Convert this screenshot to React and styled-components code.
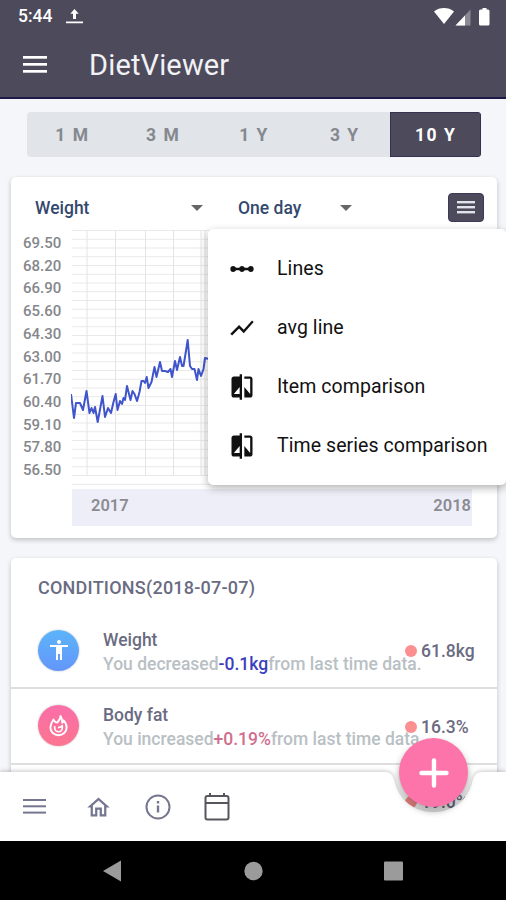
import React, { useState } from 'react'
import styled, { createGlobalStyle } from 'styled-components'
import { MdLinearScale, MdShowChart, MdCompare, MdAccessibility, MdOutlineHome } from 'react-icons/md'

const periods = ['1 M', '3 M', '1 Y', '3 Y', '10 Y']

const yLabels = ['69.50', '68.20', '66.90', '65.60', '64.30', '63.00', '61.70', '60.40', '59.10', '57.80', '56.50']

const menuItems = [
  { label: 'Lines', icon: MdLinearScale },
  { label: 'avg line', icon: MdShowChart },
  { label: 'Item comparison', icon: MdCompare },
  { label: 'Time series comparison', icon: MdCompare },
]

const weights = '71,394 74,418 76,403 80,403 83,410 86.5,391 89.5,413 91.5,408 93.5,413 95,407 97.7,422 102.5,396 105,417 108,408 111,413 113.5,402 115.7,394 117.5,410 120,401 122,404 123.5,398 125,400 127,386 129.5,396 130.5,400 132.5,391 134.5,394 137,401 139.5,392 141.5,381 143.5,381 145,383 146.7,377 148.5,388 151.5,382 154.5,367 156.5,377 160,362 162,371 165,371 168,372 170.5,369 172,377 175,361 177,370 180,357 182,366 183.5,366 185,357 187.7,340 190,366 192,369 194.5,369 197,380 198.5,369 201,376 203.5,369 205,358 209,359'

const gridX = [87, 115.5, 145.5, 173.5, 201, 205]
const gridY = Array.from({ length: 30 }, (_, i) => 230.5 + i * 8.75)

const FlameIcon = () => (
  <svg width="21" height="23" viewBox="0 0 22 24" fill="none" stroke="#fff" strokeWidth="2" strokeLinejoin="round">
    <path d="M13 2c.4 2.600-1 4.300-2.400 6C9.300 9.600 7.500 9 5.800 5.800 3.400 9 2.500 11.500 2.500 14.200a8.500 8 0 0 0 17 0c0-3.200-1.400-5.700-3.200-7.600-.3 1.400-.6 2-1.300 2.600C15 6.500 14.600 4 13 2z" />
    <path d="M7 12.500v2a4 4 0 0 0 8 0v-2.500c-1.200 1.600-2.300 2-4.500 2.200" strokeWidth="1.700" />
  </svg>
)

const LinesIcon = ({ width, height, gap, stroke, color }) => (
  <svg width={width} height={height}>
    {[0, 1, 2].map(i => (
      <rect key={i} x="0" y={i * gap} width={width} height={stroke} fill={color} />
    ))}
  </svg>
)

const Chart = () => (
  <ChartSvg viewBox="71 230 401 256">
    {gridY.map(y => <line key={y} x1="72" x2="472" y1={y} y2={y} stroke="#e9e9e9" />)}
    {gridX.map(x => <line key={x} x1={x} x2={x} y1="230" y2="476" stroke="#e4e4e4" />)}
    <polyline points={weights} fill="none" stroke="#4054cc" strokeWidth="2" strokeLinejoin="round" />
  </ChartSvg>
)

const Condition = ({ title, icon, colors, verb, diff, diffColor, value }) => (
  <ConditionRow>
    <RoundIcon $colors={colors}>{icon}</RoundIcon>
    <ConditionText>
      <ConditionTitle>{title}</ConditionTitle>
      <ConditionNote>You {verb}<Diff $color={diffColor}>{diff}</Diff>from last time data.</ConditionNote>
    </ConditionText>
    <ConditionValue><Dot />{value}</ConditionValue>
  </ConditionRow>
)

const App = () => {
  const [period, setPeriod] = useState('10 Y')

  return (
    <Screen>
      <GlobalStyle />
      <Header>
        <StatusBar>
          <Clock>5:44</Clock>
          <svg width="17" height="15" viewBox="0 0 17 15" fill="#fff">
            <path d="M8.500 0l4.200 4.800H10V10H7V4.800H4.300zM0 12.500h17v1.800H0z" />
          </svg>
          <StatusIcons>
            <svg width="60" height="20" viewBox="0 0 60 20" fill="#fff">
              <path d="M0 4.500C5.500-.1 14.500-.1 20 4.500L10 17z" />
              <path d="M36.500 2.500v16h-15z" opacity=".35" />
              <path d="M31 8.500v10h-9.500z" />
              <path d="M48.500 1h4v1.500h1.500q1.500 0 1.500 1.500v13q0 1.500-1.500 1.500h-7.500q-1.500 0-1.500-1.500V4q0-1.500 1.500-1.500h2z" />
            </svg>
          </StatusIcons>
        </StatusBar>
        <TitleBar>
          <LinesIcon width={24} height={18} gap={7} stroke={2.700} color="#fff" />
          <AppTitle>DietViewer</AppTitle>
        </TitleBar>
      </Header>

      <Content>
        <Periods>
          {periods.map(p => (
            <Period key={p} $active={p === period} onClick={() => setPeriod(p)}>{p}</Period>
          ))}
        </Periods>

        <ChartCard>
          <Selects>
            <Select $width="168px">Weight<Caret /></Select>
            <Select $width="114px">One day<Caret /></Select>
            <MenuButton>
              <LinesIcon width={18} height={13} gap={5} stroke={2.400} color="#dfe3ea" />
            </MenuButton>
          </Selects>
          <ChartBody>
            <YAxis>
              {yLabels.map(label => <span key={label}>{label}</span>)}
            </YAxis>
            <Plot>
              <Chart />
              <XAxis>
                <span>2017</span>
                <span>2018</span>
              </XAxis>
            </Plot>
          </ChartBody>
          <Menu>
            {menuItems.map(({ label, icon: Icon }) => (
              <MenuItem key={label}><Icon size={28} />{label}</MenuItem>
            ))}
          </Menu>
        </ChartCard>

        <ConditionsCard>
          <CardTitle>CONDITIONS(2018-07-07)</CardTitle>
          <Condition
            title="Weight"
            icon={<MdAccessibility size={24} />}
            colors="#5cb4fa, #6496fa"
            verb="decreased"
            diff="-0.1kg"
            diffColor="#3b3fbf"
            value="61.8kg"
          />
          <Condition
            title="Body fat"
            icon={<FlameIcon />}
            colors="#fa6ea9, #fb7590"
            verb="increased"
            diff="+0.19%"
            diffColor="#cf6e8e"
            value="16.3%"
          />
          <ConditionRow>
            <ConditionValue><Dot />19.0%</ConditionValue>
          </ConditionRow>
        </ConditionsCard>
      </Content>

      <BottomBar>
        <BarShadow><BarShape /></BarShadow>
        <BarIcons>
          <LinesIcon width={23} height={16} gap={6.300} stroke={2} color="#75768f" />
          <HomeIcon size={27} />
          <svg width="26" height="26" viewBox="0 0 26 26" fill="none" stroke="currentColor" strokeWidth="2">
            <circle cx="13" cy="13" r="11.500" />
            <path d="M13 11.500v7M13 7v2.500" strokeWidth="2.400" />
          </svg>
          <svg width="26" height="28" viewBox="0 0 26 28" fill="none" stroke="#56565c" strokeWidth="2">
            <rect x="1.500" y="3" width="23" height="23.500" rx="2" />
            <path d="M1.500 10h23M6 0v3M20 0v3" />
          </svg>
        </BarIcons>
        <AddButton>
          <svg width="30" height="30" viewBox="0 0 30 30" stroke="#fff" strokeWidth="4.400" strokeLinecap="round">
            <path d="M15 2.500v25M2.500 15h25" />
          </svg>
        </AddButton>
      </BottomBar>

      <SystemNav>
        <svg width="506" height="59" fill="#9b9b9b">
          <path d="M103 30l18-10.500v21z" />
          <circle cx="253.500" cy="30" r="9.200" />
          <rect x="384" y="20.500" width="19" height="19" rx="1" />
        </svg>
      </SystemNav>
    </Screen>
  )
}

export default App

const GlobalStyle = createGlobalStyle`
  * {
    box-sizing: border-box;
  }
  body {
    margin: 0;
    font-family: Roboto, "Liberation Sans", sans-serif;
  }
  svg {
    display: block;
    flex-shrink: 0;
  }
`

const Screen = styled.div`
  display: flex;
  flex-direction: column;
  width: 506px;
  height: 900px;
  overflow: hidden;
  background: #f4f6f9;
`

const Header = styled.header`
  flex-shrink: 0;
  height: 99px;
  background: #4d4b5b;
  border-bottom: 2px solid #1d1847;
  color: #fff;
`

const StatusBar = styled.div`
  display: flex;
  align-items: center;
  height: 32px;
  padding: 0 12px 0 18px;
`

const Clock = styled.span`
  width: 48px;
  font-size: 17.5px;
  font-weight: 500;
`

const StatusIcons = styled.div`
  margin-left: auto;
  padding-top: 1px;
`

const TitleBar = styled.div`
  display: flex;
  align-items: center;
  gap: 42px;
  height: 66px;
  padding-left: 23px;
`

const AppTitle = styled.h1`
  margin: 0;
  font-size: 29px;
  font-weight: 400;
  letter-spacing: 0.15px;
  color: #f1f1f6;
`

const Content = styled.main`
  flex: 1;
  min-height: 0;
  overflow: hidden;
  padding: 13px 9px 0 11px;
`

const Periods = styled.div`
  display: flex;
  height: 45px;
  margin: 0 16px;
  border-radius: 4px;
  overflow: hidden;
  background: #e1e4e9;
`

const Period = styled.button`
  flex: 1;
  border: 0;
  padding: 1px 0 0;
  font-family: inherit;
  font-size: 17.5px;
  font-weight: 700;
  letter-spacing: 1.5px;
  color: ${props => props.$active ? '#fff' : '#85888e'};
  background: ${props => props.$active ? '#4d4b5b' : 'transparent'};
  box-shadow: ${props => props.$active ? 'inset 0 0 0 1px #35314f' : 'none'};
`

const Card = styled.section`
  background: #fff;
  border-radius: 5px;
  box-shadow: 0 2px 5px rgba(0, 0, 0, 0.22);
  width: 486px;
`

const ChartCard = styled(Card)`
  position: relative;
  height: 361px;
  margin-top: 20px;
`

const Selects = styled.div`
  display: flex;
  align-items: center;
  height: 53px;
  padding: 7px 13px 0 24px;
`

const Select = styled.div`
  display: flex;
  align-items: center;
  justify-content: space-between;
  width: ${props => props.$width};
  margin-right: 35px;
  padding-top: 1px;
  font-size: 17.5px;
  font-weight: 500;
  color: #34496e;
`

const Caret = styled.i`
  border: 6px solid transparent;
  border-top-color: #666;
  border-bottom: 0;
`

const MenuButton = styled.button`
  display: flex;
  align-items: center;
  justify-content: center;
  width: 36px;
  height: 29px;
  margin-left: auto;
  padding: 0;
  border: 1px solid #3d3958;
  border-radius: 4px;
  background: #4d4b5b;
`

const ChartBody = styled.div`
  display: flex;
  padding-left: 12px;
`

const YAxis = styled.div`
  display: flex;
  flex-direction: column;
  width: 48px;
  padding-top: 2px;
  font-size: 15px;
  font-weight: 500;
  line-height: 22.700px;
  color: #85878c;
`

const Plot = styled.div`
  display: flex;
  flex-direction: column;
  gap: 3px;
  width: 401px;
`

const ChartSvg = styled.svg`
  width: 401px;
  height: 256px;
`

const XAxis = styled.div`
  display: flex;
  justify-content: space-between;
  height: 37px;
  margin-left: 1px;
  padding: 0 1px 4px 19px;
  line-height: 33px;
  font-size: 16.5px;
  font-weight: 600;
  color: #8b8b92;
  background: #eeeef8;
`

const Menu = styled.div`
  position: absolute;
  left: 197px;
  top: 52px;
  width: 298px;
  height: 256px;
  padding: 10px 0;
  border-radius: 5px;
  background: #fff;
  box-shadow: 0 3px 9px rgba(0, 0, 0, 0.3);
`

const MenuItem = styled.div`
  display: flex;
  align-items: center;
  gap: 21px;
  height: 59px;
  padding-left: 20px;
  font-size: 19.5px;
  letter-spacing: 0.07px;
  white-space: nowrap;
  color: #111;
`

const ConditionsCard = styled(Card)`
  height: 320px;
  margin-top: 20px;
`

const CardTitle = styled.h2`
  margin: 0;
  height: 55.5px;
  padding: 0 27px;
  line-height: 59px;
  font-size: 18px;
  font-weight: 500;
  letter-spacing: 0.23px;
  color: #6a6b82;
`

const ConditionRow = styled.div`
  display: flex;
  align-items: center;
  position: relative;
  height: 75.5px;
  padding-left: 27px;
  border-bottom: 2px solid #dedede;
`

const RoundIcon = styled.div`
  display: flex;
  align-items: center;
  justify-content: center;
  width: 41px;
  height: 41px;
  margin-right: 24px;
  border-radius: 50%;
  color: #fff;
  background: linear-gradient(${props => props.$colors});
  box-shadow: 0 0 2px rgba(0, 0, 0, 0.3);
`

const ConditionText = styled.div`
  padding-top: 3px;
  line-height: 24px;
  font-weight: 500;
  white-space: nowrap;
`

const ConditionTitle = styled.div`
  font-size: 17.5px;
  color: #6a6b82;
`

const ConditionNote = styled.div`
  font-size: 17.5px;
  color: #b9c0c4;
`

const Diff = styled.span`
  color: ${props => props.$color};
`

/* the value sits over the end of a long note */
const ConditionValue = styled.div`
  display: flex;
  align-items: center;
  gap: 4px;
  position: absolute;
  left: 394px;
  top: 27.5px;
  font-size: 17.5px;
  font-weight: 500;
  color: #6a6b82;
`

const Dot = styled.i`
  width: 12px;
  height: 12px;
  border-radius: 50%;
  background: #fc8f8f;
`

const BottomBar = styled.nav`
  position: relative;
  flex-shrink: 0;
  height: 70px;
  margin-top: -70px;
`

const BarShadow = styled.div`
  position: absolute;
  inset: 0;
  filter: drop-shadow(0 -1px 2px rgba(0, 0, 0, 0.22));
`

const BarShape = styled.div`
  height: 100%;
  background: #fff;
  clip-path: path('M0 1H385C391 1 393 5 394.500 10C399 29 414 41 433.500 41C453 41 468 29 472.500 10C474 5 476 1 482 1H506V70H0Z');
`

const BarIcons = styled.div`
  display: flex;
  align-items: center;
  gap: 33px;
  position: relative;
  height: 72px;
  padding-left: 23px;
  color: #75768f;
`

const HomeIcon = styled(MdOutlineHome)`
  margin-left: 6px;
`

const AddButton = styled.button`
  display: flex;
  align-items: center;
  justify-content: center;
  position: absolute;
  left: 399px;
  top: -33px;
  width: 69px;
  height: 69px;
  padding: 0;
  border: 0;
  border-radius: 50%;
  background: #fd74ab;
  box-shadow: 0 4px 7px rgba(0, 0, 0, 0.35);
`

const SystemNav = styled.footer`
  flex-shrink: 0;
  height: 59px;
  background: #000;
`
